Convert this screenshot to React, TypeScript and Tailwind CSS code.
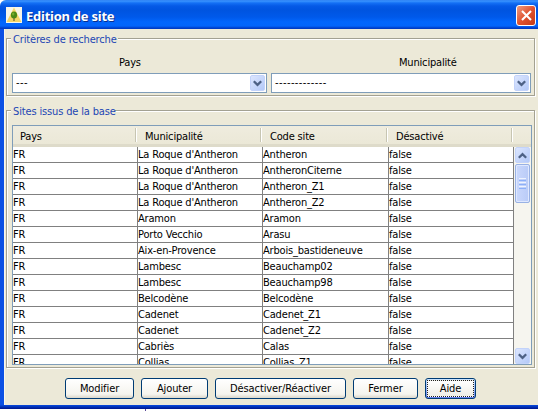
import type { ReactNode } from 'react';

const sites: [string, string, string][] = [
  ["La Roque d'Antheron", 'Antheron', 'false'],
  ["La Roque d'Antheron", 'AntheronCiterne', 'false'],
  ["La Roque d'Antheron", 'Antheron_Z1', 'false'],
  ["La Roque d'Antheron", 'Antheron_Z2', 'false'],
  ['Aramon', 'Aramon', 'false'],
  ['Porto Vecchio', 'Arasu', 'false'],
  ['Aix-en-Provence', 'Arbois_bastideneuve', 'false'],
  ['Lambesc', 'Beauchamp02', 'false'],
  ['Lambesc', 'Beauchamp98', 'false'],
  ['Belcodène', 'Belcodène', 'false'],
  ['Cadenet', 'Cadenet_Z1', 'false'],
  ['Cadenet', 'Cadenet_Z2', 'false'],
  ['Cabriès', 'Calas', 'false'],
  ['Collias', 'Collias_Z1', 'false'],
];

function Chevron({ up = false }: { up?: boolean }) {
  return (
    <svg width="9" height="7" viewBox="0 0 9 7" className={up ? 'rotate-180' : ''}>
      <path d="M0.8 1.2L4.5 4.9L8.2 1.2" fill="none" stroke="#4d6185" strokeWidth="2.3" />
    </svg>
  );
}

function ArrowBox({ up = false, className = '' }: { up?: boolean; className?: string }) {
  return (
    <div
      className={`flex shrink-0 items-center justify-center rounded-[2px] border border-[#c3d3fa] bg-linear-to-br from-[#dce6fe] to-[#b4c9f8] ${className}`}
    >
      <Chevron up={up} />
    </div>
  );
}

function Group({ title, legendClass, className, children }: { title: string; legendClass: string; className: string; children: ReactNode }) {
  return (
    <section className={`relative border border-[#a3a192] shadow-[1px_1px_0_#fff,inset_1px_1px_0_#fff] ${className}`}>
      <h2 className={`absolute -top-[8px] left-[4px] h-[16px] bg-[#ece9d8] pl-[2px] leading-[17px] tracking-[-0.15px] whitespace-nowrap text-[#1c46b4] ${legendClass}`}>
        {title}
      </h2>
      {children}
    </section>
  );
}

function Combo({ value, className }: { value: string; className: string }) {
  return (
    <div className={`flex h-[20px] items-center justify-between border border-[#7f9db9] bg-white pr-[1px] pl-[3px] ${className}`}>
      <span className="leading-[18px] tracking-[0.4px]">{value}</span>
      <ArrowBox className="h-[16px] w-[15px]" />
    </div>
  );
}

function HeaderCell({ children, className }: { children: ReactNode; className: string }) {
  return (
    <div className={`flex h-full shrink-0 items-center ${className}`}>
      <span className="flex-1 pt-[3px] leading-[15px] whitespace-nowrap">{children}</span>
      <i className="h-[14px] w-[2px] border-r border-l border-r-white border-l-[#c7c5b2]" />
    </div>
  );
}

function PushButton({ children, className, focused = false }: { children: ReactNode; className: string; focused?: boolean }) {
  return (
    <button
      className={`flex h-[21px] items-center justify-center rounded-[3px] border border-[#003c74] bg-linear-to-b p-[1px] tracking-[-0.1px] ${
        focused ? 'from-[#cee7ff] to-[#6982ee]' : 'from-white via-[#f5f4ee] via-80% to-[#dcd7cb]'
      } ${className}`}
    >
      {focused ? (
        <span className="flex h-full w-full items-center justify-center border border-dotted border-[#222] bg-linear-to-b from-white to-[#efeee6] leading-none">
          {children}
        </span>
      ) : (
        <span className="leading-none whitespace-nowrap">{children}</span>
      )}
    </button>
  );
}

const cell = 'h-[16px] shrink-0 overflow-hidden border-r border-b border-[#808080] leading-[16px] whitespace-nowrap';

export default function App() {
  return (
    <div className="h-[411px] w-[538px] overflow-hidden bg-white font-['DejaVu_Sans_Condensed','DejaVu_Sans',sans-serif] text-[11px] tracking-[-0.18px] text-black [font-stretch:condensed]">
      <div className="flex h-[409px] flex-col overflow-hidden rounded-tl-[6px] bg-[#ece9d8]">
        <header className="flex h-[29px] shrink-0 items-center bg-[linear-gradient(to_bottom,#2a7bf0_0,#3a94ff_1px,#1470f5_3px,#0559e6_6px,#0054e0_10px,#0059ea_17px,#0266fd_22px,#0365fb_26px,#003fcb_28px,#0039bf_29px)] pr-[2px] pl-[6px]">
          <svg width="16" height="16" viewBox="0 0 16 16" className="mt-px">
            <rect width="16" height="16" fill="#f8f6e8" />
            <path d="M8 0.5L15.5 15H0.5Z" fill="#f4d568" />
            <path d="M8 8V14" stroke="#7b7040" strokeWidth="1.4" />
            <ellipse cx="8" cy="8" rx="3.1" ry="3.6" fill="#4b8a16" />
            <ellipse cx="7.2" cy="7" rx="1.2" ry="1.5" fill="#79ad2c" />
          </svg>
          <h1 className="mt-[3px] ml-[4px] flex-1 font-['Noto_Sans',sans-serif] text-[13px] leading-[18px] font-bold tracking-[-0.25px] text-white [text-shadow:1px_1px_0_#0b2f8c]">
            Edition de site
          </h1>
          <button className="mt-[2px] flex h-[21px] w-[20px] items-center justify-center rounded-[3px] border border-white bg-linear-to-br from-[#ee9a7e] via-[#df5330] to-[#c43a15]">
            <svg width="13" height="13" viewBox="0 0 13 13">
              <path d="M2 2L11 11M11 2L2 11" stroke="white" strokeWidth="2.1" />
            </svg>
          </button>
        </header>

        <div className="flex h-[376px] shrink-0 flex-col border-l-4 border-[#0b50e4] pl-[2px] shadow-[inset_1px_0_0_#f8f6ec]">
          <Group title="Critères de recherche" legendClass="w-[107px]" className="mt-[9px] h-[58px] w-[529px] shrink-0">
            <div className="flex flex-col pl-[5px]">
              <div className="flex h-[34px] items-end">
                <span className="w-[259px] pl-[107px] leading-[20px]">Pays</span>
                <span className="pl-[128px] leading-[20px]">Municipalité</span>
              </div>
              <div className="flex gap-[4px]">
                <Combo value="---" className="w-[255px]" />
                <Combo value="-------------" className="w-[260px]" />
              </div>
            </div>
          </Group>

          <Group title="Sites issus de la base" legendClass="w-[104px]" className="mt-[14px] h-[258px] w-[529px] shrink-0">
            <div className="mt-[14px] ml-[5px] flex h-[240px] w-[520px] flex-col overflow-hidden border border-[#7f9db9]">
              <div className="flex h-[21px] shrink-0 items-center border-b-[3px] border-b-[#dedbca] bg-[#ece9d8] bg-linear-to-b from-[#efecde] to-[#ebe8d7]">
                <HeaderCell className="w-[124px] pl-[7px]">Pays</HeaderCell>
                <HeaderCell className="w-[125px] pl-[8px]">Municipalité</HeaderCell>
                <HeaderCell className="w-[126px] pl-[8px]">Code site</HeaderCell>
                <HeaderCell className="w-[125px] pl-[8px]">Désactivé</HeaderCell>
              </div>
              <div className="flex h-[217px] shrink-0">
                <div className="w-[501px] overflow-hidden bg-white">
                  {sites.map(([town, code, disabled], i) => (
                    <div key={i} className="flex">
                      <div className={`w-[125px] ${cell}`}>FR</div>
                      <div className={`w-[125px] ${cell}`}>{town}</div>
                      <div className={`w-[126px] ${cell}`}>{code}</div>
                      <div className={`w-[125px] ${cell}`}>{disabled}</div>
                    </div>
                  ))}
                </div>
                <div className="flex w-[17px] flex-col bg-[#f6f5ef] px-px">
                  <ArrowBox up className="h-[16px] w-[15px]" />
                  <div className="mt-px flex h-[39px] w-[15px] flex-col items-center justify-center gap-px rounded-[2px] border border-[#98b1e4] bg-linear-to-r from-[#cad8fc] to-[#b9cbf7] shadow-[inset_0_0_0_1px_#dfe8ff]">
                    <i className="h-px w-[7px] bg-[#eef4fe]" />
                    <i className="h-px w-[7px] bg-[#8cb0f8]" />
                    <i className="h-px w-[7px] bg-[#eef4fe]" />
                    <i className="h-px w-[7px] bg-[#8cb0f8]" />
                    <i className="h-px w-[7px] bg-[#eef4fe]" />
                    <i className="h-px w-[7px] bg-[#8cb0f8]" />
                  </div>
                  <ArrowBox className="mt-auto h-[16px] w-[15px]" />
                </div>
              </div>
            </div>
          </Group>

          <div className="mt-[10px] flex gap-[7px] pl-[59px]">
            <PushButton className="w-[69px]">Modifier</PushButton>
            <PushButton className="w-[67px]">Ajouter</PushButton>
            <PushButton className="w-[131px]">Désactiver/Réactiver</PushButton>
            <PushButton className="w-[65px]">Fermer</PushButton>
            <PushButton className="w-[51px]" focused>Aide</PushButton>
          </div>
        </div>
        <div className="h-[4px] shrink-0 bg-linear-to-b from-[#0a4be0] to-[#00138c]" />
      </div>
      <div className="ml-[145px] h-[2px] w-px bg-[#5a4a9a]" />
    </div>
  );
}
